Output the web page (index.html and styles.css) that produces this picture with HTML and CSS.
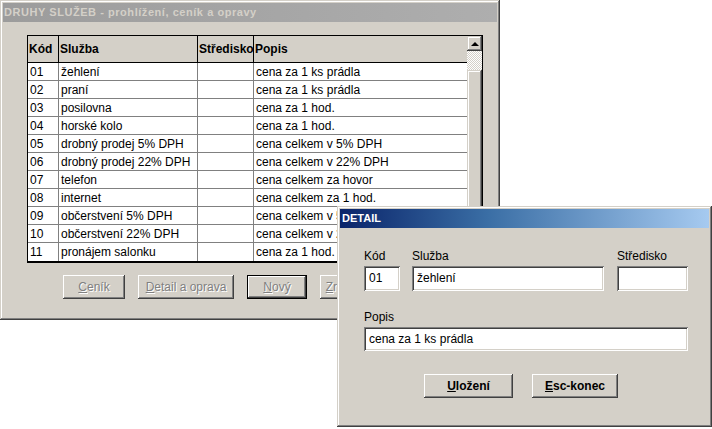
FILE: index.html
```html
<!DOCTYPE html>
<html>
<head>
<meta charset="utf-8">
<link rel="stylesheet" href="styles.css">
</head>
<body>
<div class="win main">
  <div class="title inactive">DRUHY SLUŽEB - prohlížení, ceník a opravy</div>
  <div class="main-body">
    <div class="grid-wrap">
      <div class="grid">
        <div class="h">Kód</div><div class="h">Služba</div><div class="h">Středisko</div><div class="h">Popis</div>
        <div class="c">01</div><div class="c">žehlení</div><div class="c"></div><div class="c">cena za 1 ks prádla</div>
        <div class="c">02</div><div class="c">praní</div><div class="c"></div><div class="c">cena za 1 ks prádla</div>
        <div class="c">03</div><div class="c">posilovna</div><div class="c"></div><div class="c">cena za 1 hod.</div>
        <div class="c">04</div><div class="c">horské kolo</div><div class="c"></div><div class="c">cena za 1 hod.</div>
        <div class="c">05</div><div class="c">drobný prodej 5% DPH</div><div class="c"></div><div class="c">cena celkem v 5% DPH</div>
        <div class="c">06</div><div class="c">drobný prodej 22% DPH</div><div class="c"></div><div class="c">cena celkem v 22% DPH</div>
        <div class="c">07</div><div class="c">telefon</div><div class="c"></div><div class="c">cena celkem za hovor</div>
        <div class="c">08</div><div class="c">internet</div><div class="c"></div><div class="c">cena celkem za 1 hod.</div>
        <div class="c">09</div><div class="c">občerstvení 5% DPH</div><div class="c"></div><div class="c">cena celkem v 5% DPH</div>
        <div class="c">10</div><div class="c">občerstvení 22% DPH</div><div class="c"></div><div class="c">cena celkem v 22% DPH</div>
        <div class="c">11</div><div class="c">pronájem salonku</div><div class="c"></div><div class="c">cena za 1 hod.</div>
      </div>
      <div class="sb">
        <div class="sb-btn"><span class="arr-up"></span></div>
        <div class="sb-track"></div>
        <div class="sb-thumb"></div>
        <div class="sb-btn"><span class="arr-down"></span></div>
      </div>
    </div>
    <div class="btns">
      <div class="btn dis w-cenik"><u>C</u>eník</div>
      <div class="btn dis w-detail"><u>D</u>etail a oprava</div>
      <div class="def w-novy"><div class="btn dis"><u>N</u>ový</div></div>
      <div class="btn dis w-zrus"><u>Z</u>rušení</div>
    </div>
  </div>
</div>

<div class="win detail">
  <div class="title active">DETAIL</div>
  <div class="detail-body">
    <div class="fields">
      <div class="field f-kod">
        <div class="lbl">Kód</div>
        <div class="inp">01</div>
      </div>
      <div class="field f-sluzba">
        <div class="lbl">Služba</div>
        <div class="inp">žehlení</div>
      </div>
      <div class="field f-stred">
        <div class="lbl">Středisko</div>
        <div class="inp"></div>
      </div>
    </div>
    <div class="field f-popis">
      <div class="lbl">Popis</div>
      <div class="inp inp-popis">cena za 1 ks prádla</div>
    </div>
    <div class="dbtns">
      <div class="btn bold w-ulo"><u>U</u>ložení</div>
      <div class="btn bold w-esc"><u>E</u>sc-konec</div>
    </div>
  </div>
</div>
</body>
</html>
```

FILE: styles.css
```css
html, body {
  margin: 0;
  padding: 0;
  background: #ffffff;
}
body {
  font-family: "Liberation Sans", Arial, sans-serif;
  font-size: 12px;
  color: #000;
  width: 712px;
  height: 429px;
  position: relative;
  overflow: hidden;
}

.win {
  position: absolute;
  box-sizing: border-box;
  background: #d4d0c8;
  padding: 3px;
  box-shadow: inset -1px -1px #404040, inset 1px 1px #d4d0c8,
              inset -2px -2px #808080, inset 2px 2px #ffffff;
}
.main {
  left: 0;
  top: 0;
  width: 500px;
  height: 320px;
}
.detail {
  left: 337px;
  top: 206px;
  width: 375px;
  height: 221px;
}

.title {
  height: 19px;
  line-height: 19px;
  padding-left: 2px;
  font-weight: bold;
  font-size: 11px;
  white-space: nowrap;
}
.inactive {
  background: linear-gradient(to right, #9c9c9c, #aeaeae);
  color: #d4d0c8;
  padding-left: 1px;
  letter-spacing: 0.55px;
}
.active {
  background: linear-gradient(to right, #0a246a, #3a6ea5 40%, #a6caf0);
  color: #ffffff;
}

/* main window */
.main-body {
  padding: 13px 0 0 24px;
}
.grid-wrap {
  display: flex;
  width: 456px;
  box-sizing: border-box;
  border: 1px solid #000;
  border-bottom-width: 2px;
  background: #fff;
}
.grid {
  width: 439px;
  display: grid;
  grid-template-columns: 31px 139px 56px 213px;
  grid-template-rows: 27px repeat(11, 18px);
}
.h, .c {
  box-sizing: border-box;
  white-space: nowrap;
  overflow: visible;
}
.h {
  background: #d4d0c8;
  font-weight: bold;
  border-right: 1px solid #000;
  border-bottom: 1px solid #000;
  padding-left: 1px;
  line-height: 26px;
}
.h:nth-child(4) {
  border-right: none;
}
.c {
  border-right: 1px solid #808080;
  border-bottom: 1px solid #808080;
  padding-left: 2px;
  line-height: 18px;
}
.c:nth-child(4n) {
  border-right: none;
}
.c:nth-last-child(-n+4) {
  border-bottom: none;
}

.sb {
  width: 15px;
  display: flex;
  flex-direction: column;
  background: #d4d0c8;
}
.sb-btn {
  height: 15px;
  flex: none;
  background: #d4d0c8;
  box-shadow: inset -1px -1px #404040, inset 1px 1px #d4d0c8,
              inset -2px -2px #808080, inset 2px 2px #ffffff;
  display: flex;
  align-items: center;
  justify-content: center;
}
.arr-up {
  width: 0;
  height: 0;
  border-left: 4px solid transparent;
  border-right: 4px solid transparent;
  border-bottom: 4px solid #000;
}
.arr-down {
  width: 0;
  height: 0;
  border-left: 4px solid transparent;
  border-right: 4px solid transparent;
  border-top: 4px solid #000;
}
.sb-track {
  height: 19px;
  flex: none;
  background: repeating-conic-gradient(#ffffff 0 25%, #d4d0c8 0 50%) 0 0 / 2px 2px;
}
.sb-thumb {
  flex: 1;
  background: #d4d0c8;
  box-shadow: inset -1px -1px #404040, inset 1px 1px #d4d0c8,
              inset -2px -2px #808080, inset 2px 2px #ffffff;
}

.btns {
  display: flex;
  gap: 13px;
  margin-top: 12px;
  padding-left: 36px;
}
.btn {
  box-sizing: border-box;
  height: 24px;
  line-height: 24px;
  text-align: center;
  background: #d4d0c8;
  white-space: nowrap;
  box-shadow: inset -1px -1px #404040, inset 1px 1px #ffffff,
              inset -2px -2px #808080, inset 2px 2px #d4d0c8;
}
.dis {
  color: #808080;
  text-shadow: 1px 1px #ffffff;
}
.def {
  box-sizing: border-box;
  border: 1px solid #000;
  height: 24px;
}
.def .btn {
  height: 22px;
  line-height: 22px;
}
.w-cenik { width: 62px; }
.w-detail { width: 96px; }
.w-novy { width: 60px; }
.w-zrus { width: 52px; }

/* detail window */
.detail-body {
  padding: 21px 0 0 24px;
}
.fields {
  display: flex;
}
.lbl {
  height: 14px;
  line-height: 14px;
  margin-bottom: 3px;
  white-space: nowrap;
}
.inp {
  box-sizing: border-box;
  height: 25px;
  line-height: 25px;
  padding-left: 5px;
  background: #fff;
  white-space: nowrap;
  box-shadow: inset 1px 1px #808080, inset -1px -1px #ffffff,
              inset 2px 2px #404040, inset -2px -2px #d4d0c8;
}
.f-kod { width: 36px; }
.f-sluzba { width: 192px; margin-left: 12px; }
.f-stred { width: 71px; margin-left: 13px; }
.f-popis {
  width: 324px;
  margin-top: 19px;
}
.inp-popis {
  height: 24px;
  line-height: 24px;
}
.dbtns {
  display: flex;
  gap: 19px;
  margin-top: 23px;
  padding-left: 60px;
}
.bold {
  font-weight: bold;
}
.w-ulo { width: 89px; }
.w-esc { width: 86px; }
```
